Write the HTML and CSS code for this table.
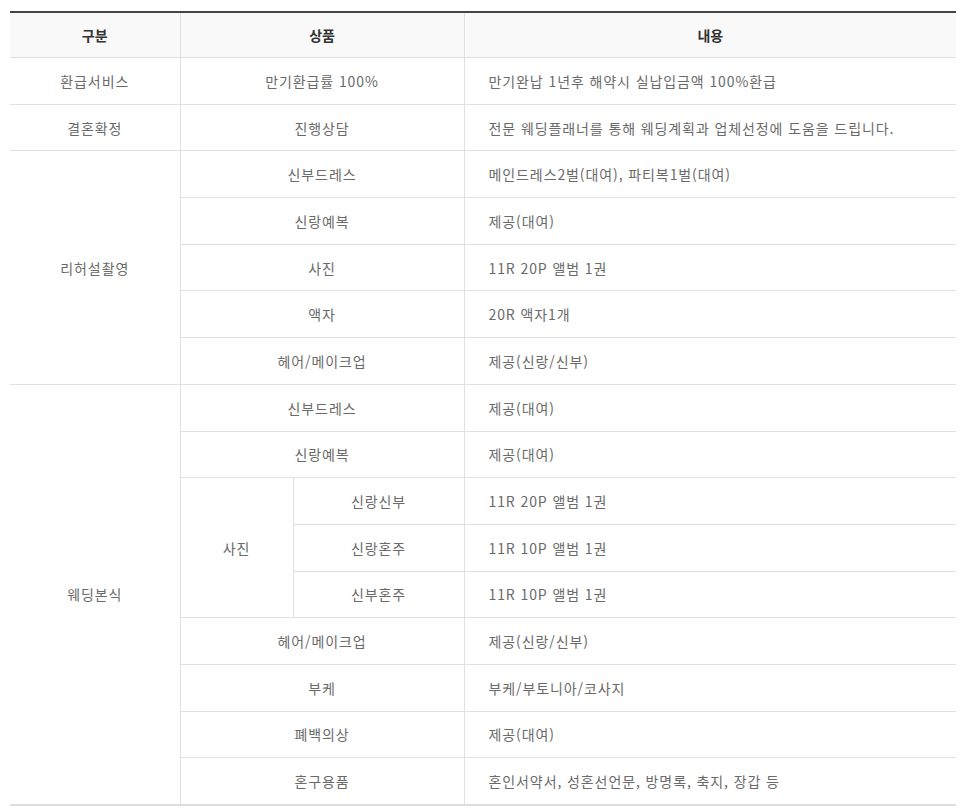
FILE: index.html
```html
<!DOCTYPE html>
<html lang="ko">
<head>
<meta charset="utf-8">
<title>상품 안내</title>
<link rel="stylesheet" href="styles.css">
</head>
<body>
<div class="wrap">
<table class="plan">
  <colgroup>
    <col class="c1">
    <col class="c2">
    <col class="c3">
    <col class="c4">
  </colgroup>
  <thead>
    <tr><th>구분</th><th colspan="2">상품</th><th>내용</th></tr>
  </thead>
  <tbody>
    <tr><td>환급서비스</td><td colspan="2">만기환급률 100%</td><td class="desc">만기완납 1년후 해약시 실납입금액 100%환급</td></tr>
    <tr><td>결혼확정</td><td colspan="2">진행상담</td><td class="desc">전문 웨딩플래너를 통해 웨딩계획과 업체선정에 도움을 드립니다.</td></tr>
    <tr><td rowspan="5">리허설촬영</td><td colspan="2">신부드레스</td><td class="desc">메인드레스2벌(대여), 파티복1벌(대여)</td></tr>
    <tr><td colspan="2">신랑예복</td><td class="desc">제공(대여)</td></tr>
    <tr><td colspan="2">사진</td><td class="desc">11R 20P 앨범 1권</td></tr>
    <tr><td colspan="2">액자</td><td class="desc">20R 액자1개</td></tr>
    <tr><td colspan="2">헤어/메이크업</td><td class="desc">제공(신랑/신부)</td></tr>
    <tr><td rowspan="9">웨딩본식</td><td colspan="2">신부드레스</td><td class="desc">제공(대여)</td></tr>
    <tr><td colspan="2">신랑예복</td><td class="desc">제공(대여)</td></tr>
    <tr><td rowspan="3">사진</td><td>신랑신부</td><td class="desc">11R 20P 앨범 1권</td></tr>
    <tr><td>신랑혼주</td><td class="desc">11R 10P 앨범 1권</td></tr>
    <tr><td>신부혼주</td><td class="desc">11R 10P 앨범 1권</td></tr>
    <tr><td colspan="2">헤어/메이크업</td><td class="desc">제공(신랑/신부)</td></tr>
    <tr><td colspan="2">부케</td><td class="desc">부케/부토니아/코사지</td></tr>
    <tr><td colspan="2">폐백의상</td><td class="desc">제공(대여)</td></tr>
    <tr><td colspan="2">혼구용품</td><td class="desc">혼인서약서, 성혼선언문, 방명록, 축지, 장갑 등</td></tr>
  </tbody>
</table>
</div>
</body>
</html>
```
FILE: styles.css
```css
html, body {
  margin: 0;
  padding: 0;
  background: #fff;
}
.wrap {
  padding: 11px 10px 0 10px;
}
.plan {
  width: 946px;
  border-collapse: collapse;
  table-layout: fixed;
  font-family: "Noto Sans CJK KR", "Noto Sans", sans-serif;
  font-size: 14px;
  letter-spacing: 0.9px;
  color: #6a6a6a;
  border-top: 2px solid #444;
  border-bottom: 2px solid #ddd;
}
.c1 { width: 170px; }
.c2 { width: 113px; }
.c3 { width: 171px; }
.c4 { width: 492px; }
.plan th,
.plan td {
  height: 45.7px;
  padding: 0;
  text-align: center;
  vertical-align: middle;
  border: 1px solid #e1e1e1;
  line-height: 20px;
}
.plan th {
  background: #f9f9f9;
  color: #333;
  font-weight: 700;
  letter-spacing: 0;
  height: 44px;
}
.plan tr > :first-child { border-left: none; }
.plan tr > :last-child { border-right: none; }
.plan td.desc {
  text-align: left;
  padding-left: 24px;
}
```
